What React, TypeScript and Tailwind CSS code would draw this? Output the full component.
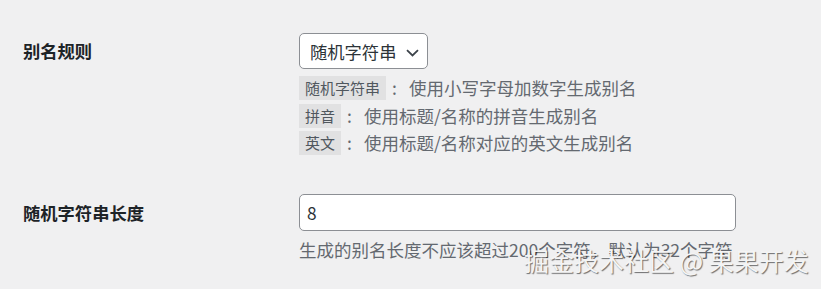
import React from "react"

const rules = [
  { code: "随机字符串", text: "使用小写字母加数字生成别名" },
  { code: "拼音", text: "使用标题/名称的拼音生成别名" },
  { code: "英文", text: "使用标题/名称对应的英文生成别名" },
]

export default function App() {
  return (
    <div className="relative min-h-[289px] overflow-hidden bg-[#f0f0f1] pl-[23px] pt-[33px] font-['Noto_Sans_CJK_SC','Noto_Sans',sans-serif] text-[#1d2327]">
      {/* alias rule */}
      <div className="flex">
        <div className="h-[36px] w-[276px] text-[17.3px] font-bold leading-[36px]">别名规则</div>
        <div>
          <div className="flex h-[36px] w-[129px] items-center justify-between rounded-[5px] border border-[#8c8f94] bg-white pl-[10px] pr-[8px] text-[17.3px] text-[#2c3338]">
            <span className="mt-[2px]">随机字符串</span>
            <svg width="13" height="8" viewBox="0 0 13 8" fill="none" className="mt-[3px]">
              <path d="M1 1.2l5.5 5.3L12 1.2" stroke="#3c434a" strokeWidth="1.8" />
            </svg>
          </div>
          <div className="mt-[5.5px] text-[17.5px] text-[#646970]">
            {rules.map((r) => (
              <div key={r.code} className="flex h-[27.5px] items-center">
                <span className="flex h-[24px] items-center bg-[#e1e1e2] px-[6px] text-[15px] text-[#50575e]">{r.code}</span>
                <span className="ml-[6px] mr-[12px]">:</span>
                <span>{r.text}</span>
              </div>
            ))}
          </div>
        </div>
      </div>

      {/* random string length */}
      <div className="mt-[37px] flex">
        <div className="h-[37px] w-[276px] text-[17.3px] font-bold leading-[37px]">随机字符串长度</div>
        <div>
          <div className="flex h-[37px] w-[437px] items-center rounded-[5px] border border-[#8c8f94] bg-white pl-[7px] text-[17.3px] text-[#2c3338]">
            8
          </div>
          <div className="mt-[6px] text-[17.5px] leading-[26px] text-[#646970]">
            生成的别名长度不应该超过200个字符，默认为32个字符
          </div>
        </div>
      </div>

      <div className="absolute left-[524px] top-[244px] text-[25px] leading-[32px] text-[#f4f4f4] [text-shadow:1px_1px_1px_rgba(0,0,0,0.55)]">
        掘金技术社区 @ 果果开发
      </div>
    </div>
  )
}
